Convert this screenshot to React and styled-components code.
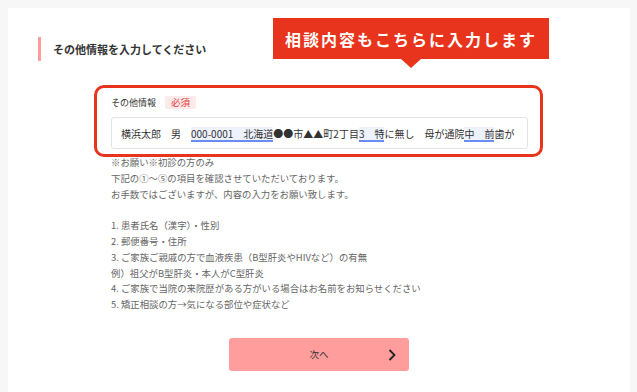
import styled, { createGlobalStyle } from "styled-components"

const GlobalStyle = createGlobalStyle`
  html, body {
    margin: 0;
    padding: 0;
    background: #f7f7f7;
    font-family: "Noto Sans CJK JP", "Noto Sans", sans-serif;
  }
`

const notes = [
  "※お願い※初診の方のみ",
  "下記の①～⑤の項目を確認させていただいております。",
  "お手数ではございますが、内容の入力をお願い致します。",
  "",
  "1. 患者氏名（漢字）・性別",
  "2. 郵便番号・住所",
  "3. ご家族ご親戚の方で血液疾患（B型肝炎やHIVなど）の有無",
  "例）祖父がB型肝炎・本人がC型肝炎",
  "4. ご家族で当院の来院歴がある方がいる場合はお名前をお知らせください",
  "5. 矯正相談の方→気になる部位や症状など",
]

const App = () => {
  return (
    <>
      <GlobalStyle />
      <Page>
        <Card>
          <SectionTitle>その他情報を入力してください</SectionTitle>

          <Callout>相談内容もこちらに入力します</Callout>

          <Form>
            <LabelRow>
              <Label>その他情報</Label>
              <Badge>必須</Badge>
            </LabelRow>
            <InputBox>
              横浜太郎　男　<Mark>000-0001　北海道</Mark>●●市▲▲町2丁目<Mark>3　特</Mark>に無し　母が通院<Mark>中　前</Mark>歯が
            </InputBox>
            <Notes>
              {notes.map((line, i) => (
                <NoteLine key={i}>{line || "\u00a0"}</NoteLine>
              ))}
            </Notes>
          </Form>

          <Highlight />

          <ButtonRow>
            <NextButton>
              <span>次へ</span>
              <Chevron viewBox="0 0 8 12">
                <path d="M1.5 1 L6.5 6 L1.5 11" fill="none" stroke="#222" strokeWidth="1.8" />
              </Chevron>
            </NextButton>
          </ButtonRow>
        </Card>
      </Page>
    </>
  )
}

const Page = styled.div`
  padding: 8px 7px 0 8px;
`

const Card = styled.div`
  position: relative;
  background: #fff;
  min-height: 384px;
  padding: 29px 0 0 30px;
  box-sizing: border-box;
`

const SectionTitle = styled.h2`
  margin: 0;
  height: 24px;
  display: flex;
  align-items: center;
  border-left: 3px solid #ff9d9d;
  padding-left: 12px;
  font-size: 11px;
  font-weight: 700;
  color: #333;
`

const Callout = styled.div`
  position: absolute;
  left: 265px;
  top: 10px;
  width: 276px;
  height: 41px;
  background: #e8341c;
  color: #fff;
  font-size: 16px;
  font-weight: 700;
  letter-spacing: 2px;
  display: flex;
  align-items: center;
  justify-content: center;

  &::after {
    content: "";
    position: absolute;
    left: 128px;
    bottom: -9px;
    border-left: 10px solid transparent;
    border-right: 10px solid transparent;
    border-top: 9px solid #e8341c;
  }
`

const Form = styled.div`
  margin-top: 34px;
  padding-left: 73px;
  width: 417px;
`

const LabelRow = styled.div`
  display: flex;
  align-items: center;
  height: 14px;
  gap: 9px;
`

const Label = styled.span`
  font-size: 9px;
  color: #333;
`

const Badge = styled.span`
  font-size: 9.5px;
  color: #e23a3a;
  background: #fdeaea;
  border-radius: 2px;
  padding: 0 6px;
  line-height: 13px;
`

const InputBox = styled.div`
  margin-top: 8px;
  height: 32px;
  box-sizing: border-box;
  border: 1px solid #e3e3e3;
  border-radius: 3px;
  padding: 0 9px;
  display: flex;
  align-items: center;
  font-size: 10px;
  color: #333;
  white-space: nowrap;
`

const Mark = styled.span`
  background: #eef2fd;
  border-bottom: 2px solid #6b8cf0;
  line-height: 13px;
  margin-top: 2px;
`

const Notes = styled.div`
  margin-top: 6px;
  font-size: 9.4px;
  line-height: 15.8px;
  color: #666;
  white-space: nowrap;
`

const NoteLine = styled.div``

const Highlight = styled.div`
  position: absolute;
  left: 86px;
  top: 77px;
  width: 449px;
  height: 72px;
  box-sizing: border-box;
  border: 3px solid #e8341c;
  border-radius: 10px;
  pointer-events: none;
`

const ButtonRow = styled.div`
  margin-top: 25px;
  padding-left: 191px;
`

const NextButton = styled.button`
  position: relative;
  width: 180px;
  height: 33px;
  border: 0;
  border-radius: 3px;
  background: #ff9d9d;
  font-family: inherit;
  font-size: 9.5px;
  color: #333;
  display: flex;
  align-items: center;
  justify-content: center;
  cursor: pointer;
`

const Chevron = styled.svg`
  position: absolute;
  right: 13px;
  top: 11px;
  width: 8px;
  height: 12px;
`

export default App
